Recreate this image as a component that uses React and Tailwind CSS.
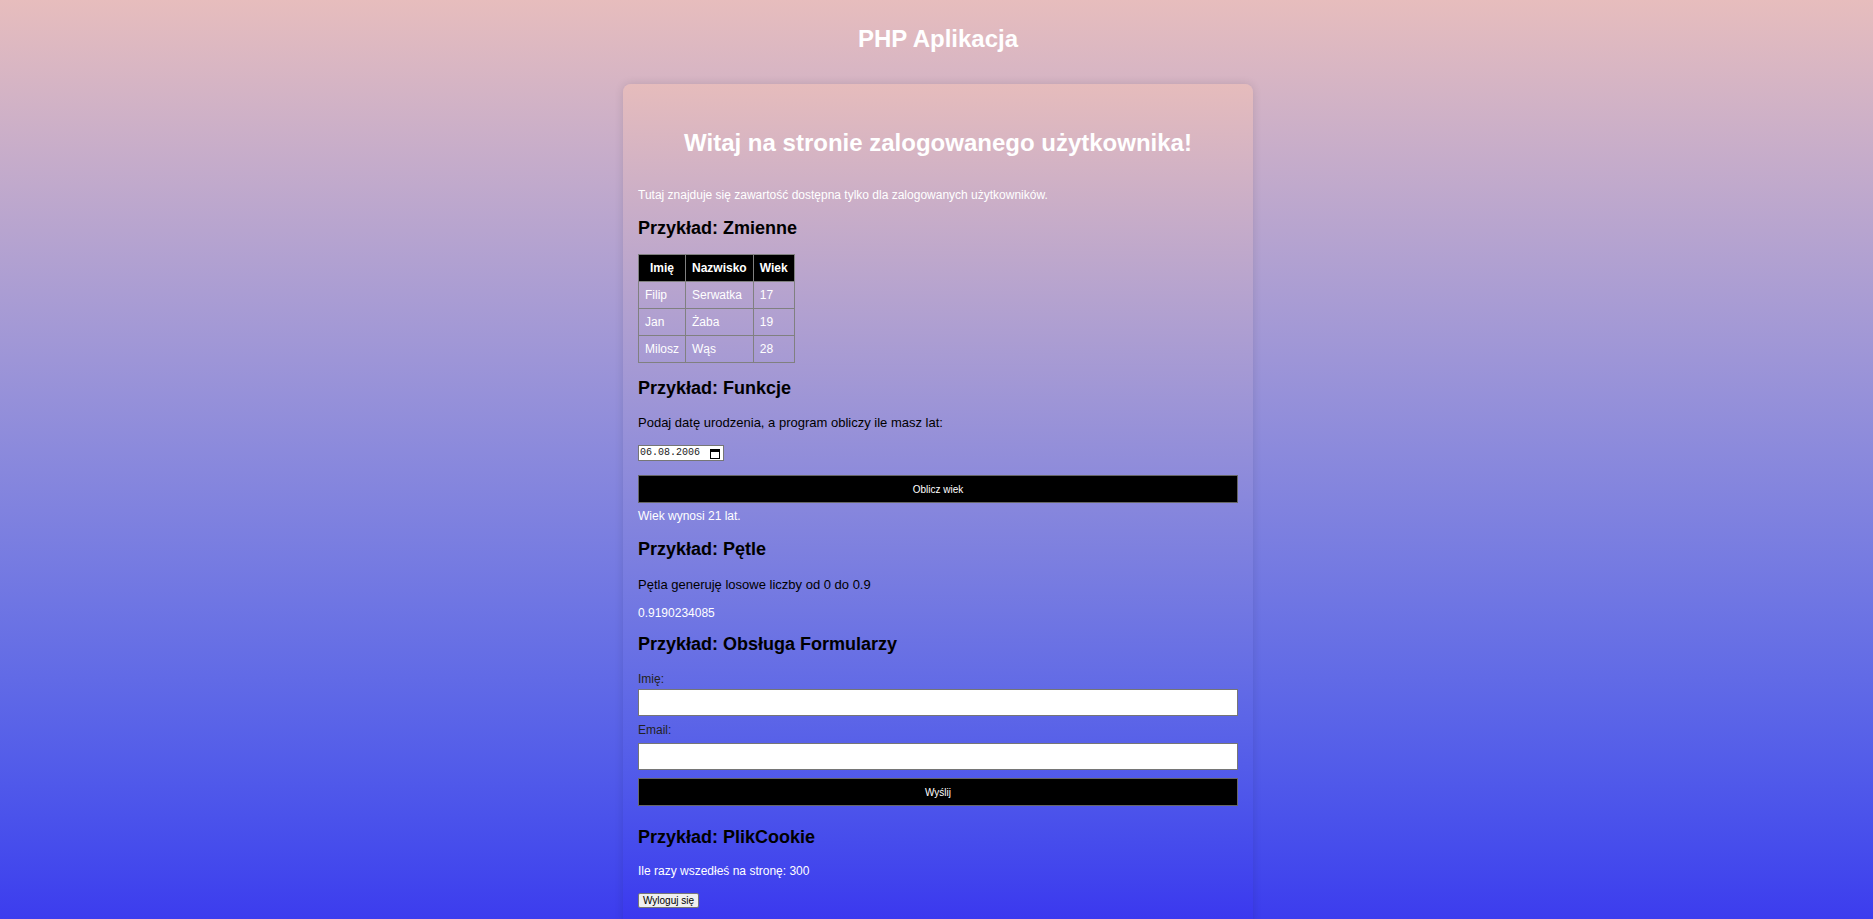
import React from "react";

const rows = [
  ["Filip", "Serwatka", "17"],
  ["Jan", "Żaba", "19"],
  ["Milosz", "Wąs", "28"],
];

const CalendarIcon = () => (
  <svg width="10" height="11" viewBox="0 0 10 11" fill="none">
    <rect x="0.5" y="1.5" width="9" height="9" stroke="#000" />
    <rect x="0.5" y="1.5" width="9" height="2.5" fill="#000" />
  </svg>
);

const App = () => {
  return (
    <div
      className="min-h-screen bg-gradient-to-b from-[#e7bdbd] to-[#3934ef] pb-[20px] pl-[3px]"
      style={{ fontFamily: '"Liberation Sans", Arial, sans-serif' }}
    >
      <h1 className="pt-[25px] text-center text-[24px] leading-[28px] font-bold text-white">PHP Aplikacja</h1>

      <div className="mx-auto mt-[31px] w-[630px] rounded-[8px] bg-gradient-to-b from-[#e6bcbc] to-[#3a35ef] px-[15px] pt-[45px] pb-[20px] shadow-[0_0_10px_rgba(0,0,0,0.12)]">
        <h2 className="text-center text-[24px] leading-[28px] font-bold text-white">
          Witaj na stronie zalogowanego użytkownika!
        </h2>

        <p className="mt-[31px] text-[12px] leading-[14px] text-white">
          Tutaj znajduje się zawartość dostępna tylko dla zalogowanych użytkowników.
        </p>

        <h3 className="mt-[16px] text-[18px] leading-[21px] font-bold text-black">Przykład: Zmienne</h3>
        <table className="mt-[15px] border-collapse text-[12px] leading-[14px]">
          <thead>
            <tr className="bg-black text-white">
              <th className="border border-[#808080] px-[6px] py-[6px] font-bold">Imię</th>
              <th className="border border-[#808080] px-[6px] py-[6px] font-bold">Nazwisko</th>
              <th className="border border-[#808080] px-[6px] py-[6px] font-bold">Wiek</th>
            </tr>
          </thead>
          <tbody>
            {rows.map((r) => (
              <tr key={r[0]} className="text-white">
                {r.map((c) => (
                  <td key={c} className="border border-[#808080] px-[6px] py-[6px]">
                    {c}
                  </td>
                ))}
              </tr>
            ))}
          </tbody>
        </table>

        <h3 className="mt-[15px] text-[18px] leading-[21px] font-bold text-black">Przykład: Funkcje</h3>
        <p className="mt-[16px] text-[13px] leading-[15px] text-black">
          Podaj datę urodzenia, a program obliczy ile masz lat:
        </p>
        <div className="mt-[15px] flex h-[16px] w-[86px] items-center justify-between border border-[#767676] bg-white pl-[1px] pr-[3px]">
          <span className="text-[10px] leading-[12px] text-[#222]" style={{ fontFamily: '"Liberation Mono", monospace' }}>
            06.08.2006
          </span>
          <CalendarIcon />
        </div>
        <button className="mt-[14px] flex h-[28px] w-full items-center justify-center border border-[#666] bg-black text-[10px] text-white">
          Oblicz wiek
        </button>
        <p className="mt-[6px] text-[12px] leading-[14px] text-white">Wiek wynosi 21 lat.</p>

        <h3 className="mt-[16px] text-[18px] leading-[21px] font-bold text-black">Przykład: Pętle</h3>
        <p className="mt-[17px] text-[13px] leading-[15px] text-black">Pętla generuję losowe liczby od 0 do 0.9</p>
        <p className="mt-[14px] text-[12px] leading-[14px] text-white">0.9190234085</p>

        <h3 className="mt-[14px] text-[18px] leading-[21px] font-bold text-black">Przykład: Obsługa Formularzy</h3>
        <div className="mt-[17px] text-[12px] leading-[14px] text-[#222]">Imię:</div>
        <div className="mt-[3px] h-[27px] w-full border border-[#767676] bg-white" />
        <div className="mt-[7px] text-[12px] leading-[14px] text-[#222]">Email:</div>
        <div className="mt-[6px] h-[27px] w-full border border-[#767676] bg-white" />
        <button className="mt-[8px] flex h-[28px] w-full items-center justify-center border border-[#666] bg-black text-[10px] text-white">
          Wyślij
        </button>

        <h3 className="mt-[21px] text-[18px] leading-[21px] font-bold text-black">Przykład: PlikCookie</h3>
        <p className="mt-[16px] text-[12px] leading-[14px] text-white">Ile razy wszedłeś na stronę: 300</p>
        <button className="mt-[15px] flex h-[15px] w-[61px] items-center justify-center rounded-[2px] border border-[#767676] bg-[#efefef] text-[10px] leading-[12px] text-black">
          Wyloguj się
        </button>
      </div>
    </div>
  );
};

export default App;
